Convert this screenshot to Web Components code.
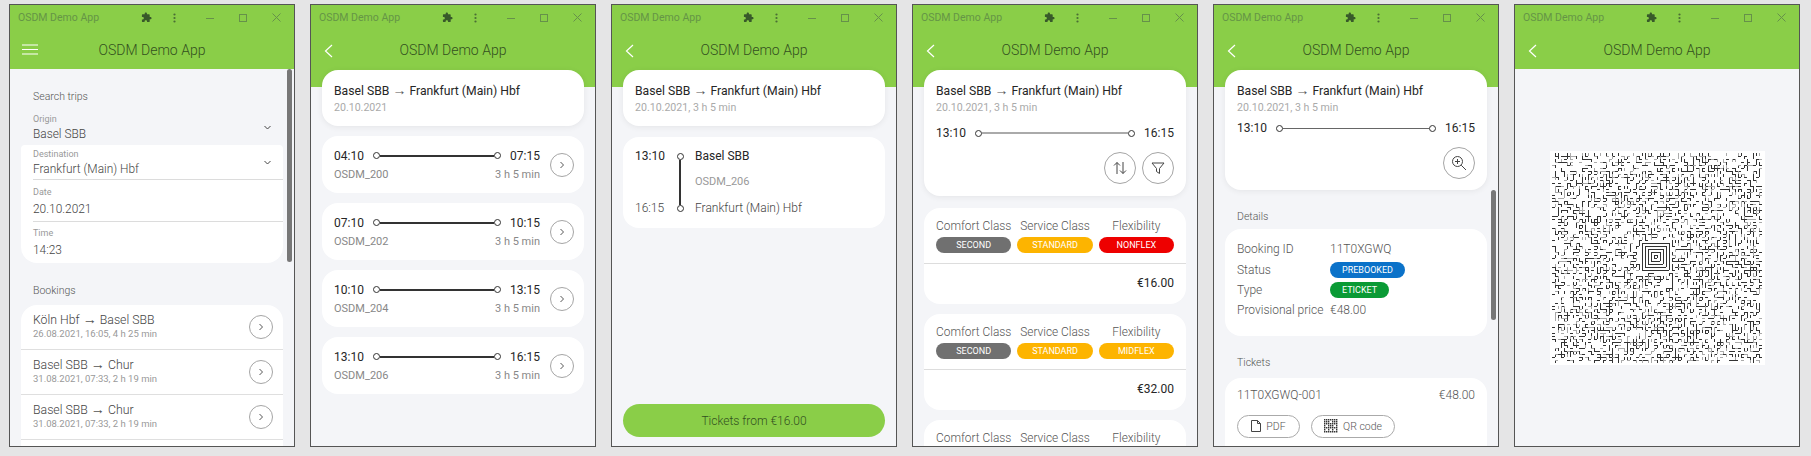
<!DOCTYPE html>
<html lang="en">
<head>
<meta charset="UTF-8">
<title>OSDM Demo App</title>
<style>
  html, body { margin: 0; background: #e5e5e6; }
  body { font: 300 12px Roboto, "Liberation Sans", sans-serif; color: #444; }
  demo-screens { height: 456px; }
</style>
</head>
<body>
<script>
'use strict'
// small helper, every element gets an open shadow root with its own style
function el(name, render) {
  customElements.define(name, class extends HTMLElement {
    connectedCallback() {
      if (this.shadowRoot) return
      const a = n => this.getAttribute(n) || ''
      this.attachShadow({mode: 'open'}).innerHTML = render(a, this)
    }
  })
}

const GREEN = '#8ace48'
const chevronRight = `<svg width="6" height="8" viewBox="0 0 6 8" fill="none" stroke="#555" stroke-width="1"><path d="M1.5 1l3 3-3 3"/></svg>`
// the arrow in Roboto is too short, the long one comes from Liberation Sans
const longArrow = s => s.replace('→', '<span style="font-family:\'Liberation Sans\',sans-serif;font-size:1.15em;font-weight:400;color:#555">→</span>')

el('demo-screens', () => `<style>
  :host { display: flex; gap: 15px; padding: 4px 0 0 9px; box-sizing: border-box; }
</style><slot></slot>`)

el('app-window', (a) => {
  const nav = a('nav') === 'menu'
    ? `<svg width="16" height="11" viewBox="0 0 16 11" stroke="#fff" stroke-width="1.2"><path d="M0 1h16M0 5.5h16M0 10h16"/></svg>`
    : `<svg width="9" height="14" viewBox="0 0 9 14" fill="none" stroke="#fff" stroke-width="1.2"><path d="M8 1L1.5 7 8 13"/></svg>`
  return `<style>
  :host { display: flex; flex-direction: column; flex: none; width: 286px; height: 443px; box-sizing: border-box;
    border: 1px solid #555; background: #f4f5f8; overflow: hidden; }
  .title { display: flex; align-items: center; height: 25px; flex: none; background: ${GREEN}; color: #659546; font-size: 10.5px; font-weight: 400; padding-left: 8px; position: relative; }
  .title span { flex: 1; }
  .title svg { flex: none; display: block; }
  .puz { margin: 0 21px 0 0; }
  .dots { margin-right: 30px; }
  .min { margin-right: 25px; }
  .max { margin-right: 25px; }
  .cls { margin-right: 13px; }
  .bar { display: flex; align-items: center; justify-content: center; height: 39px; flex: none; background: ${GREEN}; color: #33501f; font-size: 14px; position: relative; }
  .nav { position: absolute; left: ${a('nav') === 'menu' ? 12 : 13}px; top: 14px; display: flex; }
  .body { flex: 1; min-height: 0; position: relative; display: flex; flex-direction: column; }
  :host([band]) .body { background: linear-gradient(${GREEN} 18px, transparent 18px); }
</style>
<div class="title"><span>OSDM Demo App</span>
  <svg class="puz" width="11" height="11" viewBox="0 0 24 24" fill="#38592a"><path d="M20.5 11H19V7c0-1.1-.9-2-2-2h-4V3.5C13 2.12 11.88 1 10.5 1S8 2.12 8 3.5V5H4c-1.1 0-1.99.9-1.99 2v3.8H3.5c1.49 0 2.7 1.21 2.7 2.7s-1.21 2.7-2.7 2.7H2V20c0 1.1.9 2 2 2h3.8v-1.5c0-1.49 1.21-2.7 2.7-2.7 1.49 0 2.7 1.21 2.7 2.7V22H17c1.1 0 2-.9 2-2v-4h1.5c1.38 0 2.5-1.12 2.5-2.5S21.88 11 20.5 11z"/></svg>
  <svg class="dots" width="3" height="10" viewBox="0 0 3 10" fill="#4a6d35"><circle cx="1.5" cy="1.5" r="1.1"/><circle cx="1.5" cy="5" r="1.1"/><circle cx="1.5" cy="8.5" r="1.1"/></svg>
  <svg class="min" width="8" height="8" viewBox="0 0 8 8" stroke="#66914a"><path d="M0 4.5h8"/></svg>
  <svg class="max" width="8" height="8" viewBox="0 0 8 8" fill="none" stroke="#66914a"><rect x=".5" y=".5" width="7" height="7"/></svg>
  <svg class="cls" width="9" height="9" viewBox="0 0 9 9" stroke="#66914a"><path d="M.5.5l8 8M8.5.5l-8 8"/></svg>
</div>
<div class="bar"><span class="nav">${nav}</span>OSDM Demo App</div>
<div class="body"><slot></slot></div>`
})

el('scroll-thumb', () => `<style>
  :host { display: block; position: absolute; right: 2px; width: 5px; background: #777; border-radius: 3px; }
</style>`)

el('section-label', () => `<style>
  :host { display: block; font-size: 10.5px; line-height: 12px; padding-left: 23px; color: #555; }
</style><slot></slot>`)

el('white-card', () => `<style>
  :host { display: block; flex: none; margin: 0 11px; background: #fff; border-radius: 16px; box-sizing: border-box; }
  :host([raised]) { box-shadow: 0 1px 6px rgba(0,0,0,.07); }
</style><slot></slot>`)

el('field-row', (a) => `<style>
  :host { display: flex; align-items: center; margin-left: 12px; padding: var(--pt, 4px) var(--pr, 12px) var(--pb, 4px) 0; }
  :host([line]) { border-bottom: 1px solid #dcdcdc; }
  .t { flex: 1; }
  .l { font-size: 9px; line-height: 10px; color: #999; font-weight: 400; }
  .v { font-size: 11.9px; line-height: 14px; margin-top: var(--gap, 3px); color: #444; }
</style><div class="t"><div class="l">${a('label')}</div><div class="v">${a('value')}</div></div><slot></slot>`)

el('select-arrow', () => `<style>:host { display: flex; }</style>
<svg width="7" height="5" viewBox="0 0 7 5" fill="none" stroke="#444"><path d="M.5 1l3 3 3-3"/></svg>`)

el('round-button', (a) => {
  const big = a('size') === 'big'
  return `<style>
  :host { display: flex; align-items: center; justify-content: center; flex: none; box-sizing: border-box;
    width: ${big ? 32 : 24}px; height: ${big ? 32 : 24}px; border: 1px solid #a5a5a5; border-radius: 50%; background: #fff; }
</style><slot>${chevronRight}</slot>`
})

el('booking-row', (a) => `<style>
  :host { display: flex; align-items: center; height: 45px; box-sizing: border-box; padding: 0 10px 0 12px; border-bottom: 1px solid #dfdfdf; }
  .t { flex: 1; padding-bottom: 2px; }
  .a { font-size: 12.3px; line-height: 14px; color: #444; }
  .b { font-size: 9.5px; line-height: 12px; margin-top: 1px; color: #999; font-weight: 400; }
</style><div class="t"><div class="a">${longArrow(a('route'))}</div><div class="b">${a('sub')}</div></div><round-button></round-button>`)

el('trip-head', (a) => `<style>
  :host { display: block; }
  .a { font-size: 12.2px; line-height: 14px; font-weight: 400; color: #262626; }
  .b { font-size: 10.6px; line-height: 12px; margin-top: 4px; color: #aaa; font-weight: 400; }
</style><div class="a">${longArrow(a('route'))}</div><div class="b">${a('sub')}</div>`)

el('time-line', (a) => `<style>
  :host { display: flex; align-items: center; gap: 9px; font-size: 12px; line-height: 14px; font-weight: 400; color: #262626; }
  .d { flex: none; width: 5px; height: 5px; border: 1px solid #333; border-radius: 50%; background: #fff; }
  .l { flex: 1; height: var(--line-h, 2px); background: var(--line-c, #333); }
  .w { flex: 1; display: flex; align-items: center; }
</style><span>${a('from')}</span><div class="w"><span class="d"></span><span class="l"></span><span class="d"></span></div><span>${a('to')}</span>`)

el('journey-card', (a) => `<style>
  :host { display: block; flex: none; margin: 10px 11px 0; height: 57px; box-sizing: border-box; background: #fff; border-radius: 16px; padding: 0 10px 0 12px; }
  .r { display: flex; align-items: center; gap: 10px; height: 100%; }
  .t { flex: 1; padding-top: 1px; }
  .s { display: flex; justify-content: space-between; font-size: 11px; line-height: 14px; margin-top: 5px; color: #888; font-weight: 400; }
</style><div class="r"><div class="t"><time-line from="${a('from')}" to="${a('to')}"></time-line>
<div class="s"><span>${a('code')}</span><span>${a('dur')}</span></div></div><round-button></round-button></div>`)

el('leg-card', (a) => `<style>
  :host { display: block; flex: none; margin: 11px 11px 0; height: 91px; box-sizing: border-box; background: #fff; border-radius: 16px; padding: 12px 12px 0; }
  .g { display: grid; grid-template-columns: 39px 12px 1fr; grid-template-rows: 14px 38px 14px; column-gap: 0; font-size: 12px; line-height: 14px; color: #444; }
  .v { grid-column: 2; grid-row: 1 / 4; display: flex; flex-direction: column; align-items: center; padding: 3.5px 0; }
  .d { flex: none; width: 5px; height: 5px; border: 1px solid #333; border-radius: 50%; background: #fff; }
  .l { flex: 1; width: 2px; background: #333; }
  .s { grid-column: 3; padding-left: 9px; }
  .b { font-weight: 400; color: #262626; }
  .c { align-self: center; color: #999; font-size: 11px; font-weight: 400; }
</style><div class="g">
<div class="b">${a('dep')}</div><div class="v"><span class="d"></span><span class="l"></span><span class="d"></span></div><div class="s b">${a('from')}</div>
<div></div><div class="s c">${a('code')}</div>
<div>${a('arr')}</div><div class="s">${a('to')}</div></div>`)

el('green-button', () => `<style>
  :host { display: flex; align-items: center; justify-content: center; flex: none; margin: auto 11px 9px; height: 33px; border-radius: 17px; background: ${GREEN}; color: #33501f; font-size: 12px; }
</style><slot></slot>`)

el('status-pill', (a) => `<style>
  :host { display: inline-flex; align-items: center; justify-content: center; box-sizing: border-box; height: 16px; border-radius: 8px; padding: 0 12px; background: ${a('color')}; color: #fff; font-size: 9px; font-weight: 400; }
</style><slot></slot>`)

// the last card of the list is cut by the window, it only shows its heads
el('offer-card', (a) => `<style>
  :host { display: block; flex: none; margin: 0 11px 10px; height: 96px; box-sizing: border-box; background: #fff; border-radius: 16px; padding-top: 11px; }
  .g { display: grid; grid-template-columns: repeat(3, 1fr); column-gap: 6px; padding: 0 12px; text-align: center; }
  .h { font-size: 11.9px; line-height: 14px; color: #555; margin-bottom: 4px; white-space: nowrap; }
  status-pill { padding: 0; }
  .p { border-top: 1px solid #ddd; margin-top: 10px; padding: 12px 12px 0; text-align: right; font-size: 12px; line-height: 14px; font-weight: 400; color: #262626; }
</style><div class="g">
<div class="h">Comfort Class</div><div class="h">Service Class</div><div class="h">Flexibility</div>
${a('price') ? `<status-pill color="#707070">${a('comfort')}</status-pill><status-pill color="#fdb400">${a('service')}</status-pill><status-pill color="${a('flexcolor')}">${a('flex')}</status-pill>` : ''}
</div>${a('price') ? `<div class="p">${a('price')}</div>` : ''}`)

el('detail-row', (a) => `<style>
  :host { display: grid; grid-template-columns: 93px 1fr; align-items: center; height: 20.4px; font-size: 12px; color: #555; }
  .v { display: flex; }
</style><span>${a('label')}</span><span class="v"><slot></slot></span>`)

el('outline-button', () => `<style>
  :host { display: inline-flex; align-items: center; justify-content: center; gap: 5px; box-sizing: border-box; height: 23px; border: 1px solid #aaa; border-radius: 12px; font-size: 10.5px; color: #555; }
</style><slot></slot>`)

function noise(seed) {
  return () => (seed = (seed * 1664525 + 1013904223) >>> 0) / 4294967296
}

el('mini-code', () => {
  const rnd = noise(1234)
  let p = ''
  for (let y = 0; y < 7; y++) for (let x = 0; x < 7; x++) if (x % 2 === 0 || y % 2 === 0 || rnd() > .5) p += `M${x * 2} ${y * 2}h1.4v1.4h-1.4z`
  return `<style>:host { display: flex; }</style><svg width="14" height="14" viewBox="0 0 14 14" fill="#333"><path d="${p}"/></svg>`
})

// the code itself is only noise with the bullseye in the middle
el('aztec-code', () => {
  const n = 70, s = 3, mid = n / 2 - 1
  const rnd = noise(20211020)
  const on = []
  const ring = (x, y) => Math.max(Math.abs(x - mid), Math.abs(y - mid))
  for (let y = 0; y < n; y++) {
    on.push([])
    for (let x = 0; x < n; x++) {
      const d = ring(x, y)
      on[y].push(d <= 4 ? d % 2 === 0 : d === 5 ? false : rnd() > .5)
    }
  }
  let dark = '', light = ''
  const add = (seg, keep) => {
    const r = rnd()
    if (keep || r < .5) dark += seg
    else if (r < .72) light += seg
  }
  for (let y = 0; y < n; y++) for (let x = 0; x < n; x++) {
    const core = ring(x, y) <= 5
    if (x + 1 < n && on[y][x] !== on[y][x + 1]) add(`M${(x + 1) * s + .5} ${y * s}v${s}`, core)
    if (y + 1 < n && on[y][x] !== on[y + 1][x]) add(`M${x * s} ${(y + 1) * s + .5}h${s}`, core)
  }
  return `<style>
  :host { display: block; flex: none; background: #fff; padding: 2px 2px 1px; }
  svg { display: block; }
</style><svg width="${n * s + 1}" height="${n * s + 1}" fill="none" stroke-width="1" shape-rendering="crispEdges"><path stroke="#333" d="${dark}"/><path stroke="#aaa" d="${light}"/></svg>`
})
</script>

<demo-screens>
  <app-window nav="menu">
    <section-label style="margin-top:22px;margin-bottom:5px">Search trips</section-label>
    <field-row label="Origin" value="Basel SBB" style="margin-left:23px;--pr:23px;--pt:12px;margin-top:-6px;--pb:4px"><select-arrow></select-arrow></field-row>
    <white-card style="border-radius:4px 4px 16px 16px">
      <field-row line label="Destination" value="Frankfurt (Main) Hbf" style="--pt:4px;--pb:3px"><select-arrow></select-arrow></field-row>
      <field-row line label="Date" value="20.10.2021" style="--pt:7px;--gap:5px;--pb:5px"></field-row>
      <field-row label="Time" value="14:23" style="--pt:6px;--gap:5px;--pb:6px"></field-row>
    </white-card>
    <section-label style="margin-top:22px;margin-bottom:8px">Bookings</section-label>
    <white-card>
      <booking-row route="Köln Hbf → Basel SBB" sub="26.08.2021, 16:05, 4 h 25 min"></booking-row>
      <booking-row route="Basel SBB → Chur" sub="31.08.2021, 07:33, 2 h 19 min"></booking-row>
      <booking-row route="Basel SBB → Chur" sub="31.08.2021, 07:33, 2 h 19 min"></booking-row>
      <div style="height:45px"></div>
    </white-card>
    <scroll-thumb style="top:0;height:193px"></scroll-thumb>
  </app-window>

  <app-window nav="back" band>
    <white-card raised style="margin-top:1px;padding:13px 12px 12px">
      <trip-head route="Basel SBB → Frankfurt (Main) Hbf" sub="20.10.2021"></trip-head>
    </white-card>
    <journey-card from="04:10" to="07:15" code="OSDM_200" dur="3 h 5 min"></journey-card>
    <journey-card from="07:10" to="10:15" code="OSDM_202" dur="3 h 5 min"></journey-card>
    <journey-card from="10:10" to="13:15" code="OSDM_204" dur="3 h 5 min"></journey-card>
    <journey-card from="13:10" to="16:15" code="OSDM_206" dur="3 h 5 min"></journey-card>
  </app-window>

  <app-window nav="back" band>
    <white-card raised style="margin-top:1px;padding:13px 12px 12px">
      <trip-head route="Basel SBB → Frankfurt (Main) Hbf" sub="20.10.2021, 3 h 5 min"></trip-head>
    </white-card>
    <leg-card dep="13:10" arr="16:15" from="Basel SBB" to="Frankfurt (Main) Hbf" code="OSDM_206"></leg-card>
    <green-button>Tickets from €16.00</green-button>
  </app-window>

  <app-window nav="back" band>
    <white-card raised style="margin-top:1px;margin-bottom:12px;padding:13px 12px 12px">
      <trip-head route="Basel SBB → Frankfurt (Main) Hbf" sub="20.10.2021, 3 h 5 min"></trip-head>
      <time-line from="13:10" to="16:15" style="margin-top:12px;--line-h:2px;--line-c:#aaa"></time-line>
      <div style="display:flex;justify-content:flex-end;gap:6px;margin-top:12px">
        <round-button size="big"><svg width="14" height="14" viewBox="0 0 14 14" fill="none" stroke="#444" stroke-width="1"><path d="M4 13V1.5M1 4.5l3-3 3 3M10 1v11.5M7 9.5l3 3 3-3"/></svg></round-button>
        <round-button size="big"><svg width="14" height="14" viewBox="0 0 14 14" fill="none" stroke="#444" stroke-width="1"><path d="M1 2h12L8.5 7.5v5l-3-2v-3z"/></svg></round-button>
      </div>
    </white-card>
    <offer-card comfort="SECOND" service="STANDARD" flex="NONFLEX" flexcolor="#ee0000" price="€16.00"></offer-card>
    <offer-card comfort="SECOND" service="STANDARD" flex="MIDFLEX" flexcolor="#fdb400" price="€32.00"></offer-card>
    <offer-card></offer-card>
  </app-window>

  <app-window nav="back" band>
    <white-card raised style="margin-top:1px;padding:13px 12px 11px">
      <trip-head route="Basel SBB → Frankfurt (Main) Hbf" sub="20.10.2021, 3 h 5 min"></trip-head>
      <time-line from="13:10" to="16:15" style="margin-top:7px;--line-h:1px;--line-c:#666"></time-line>
      <div style="display:flex;justify-content:flex-end;margin-top:12px">
        <round-button size="big"><svg width="16" height="16" viewBox="0 0 16 16" fill="none" stroke="#444" stroke-width="1"><circle cx="6.5" cy="6.5" r="5"/><path d="M10.2 10.2L15 15M6.5 4v5M4 6.5h5"/></svg></round-button>
      </div>
    </white-card>
    <section-label style="margin-top:21px;margin-bottom:6px">Details</section-label>
    <white-card style="padding:10px 12px 15px">
      <detail-row label="Booking ID">11T0XGWQ</detail-row>
      <detail-row label="Status"><status-pill color="#0b72c9">PREBOOKED</status-pill></detail-row>
      <detail-row label="Type"><status-pill color="#0a9a35">ETICKET</status-pill></detail-row>
      <detail-row label="Provisional price">€48.00</detail-row>
    </white-card>
    <section-label style="margin-top:21px;margin-bottom:9px">Tickets</section-label>
    <white-card style="padding:10px 12px 40px">
      <div style="display:flex;justify-content:space-between;font-size:12px;line-height:14px;color:#555"><span>11T0XGWQ-001</span><span>€48.00</span></div>
      <div style="display:flex;gap:11px;margin-top:13px">
        <outline-button style="width:63px"><svg width="10" height="12" viewBox="0 0 10 12" fill="none" stroke="#444"><path d="M.5.5h6l3 3v8h-9zM6.5.5v3h3"/></svg>PDF</outline-button>
        <outline-button style="width:84px"><mini-code></mini-code>QR code</outline-button>
      </div>
    </white-card>
    <scroll-thumb style="top:121px;height:130px"></scroll-thumb>
  </app-window>

  <app-window nav="back">
    <div style="flex:1;display:flex;align-items:center;justify-content:center"><aztec-code></aztec-code></div>
  </app-window>
</demo-screens>
</body>
</html>
